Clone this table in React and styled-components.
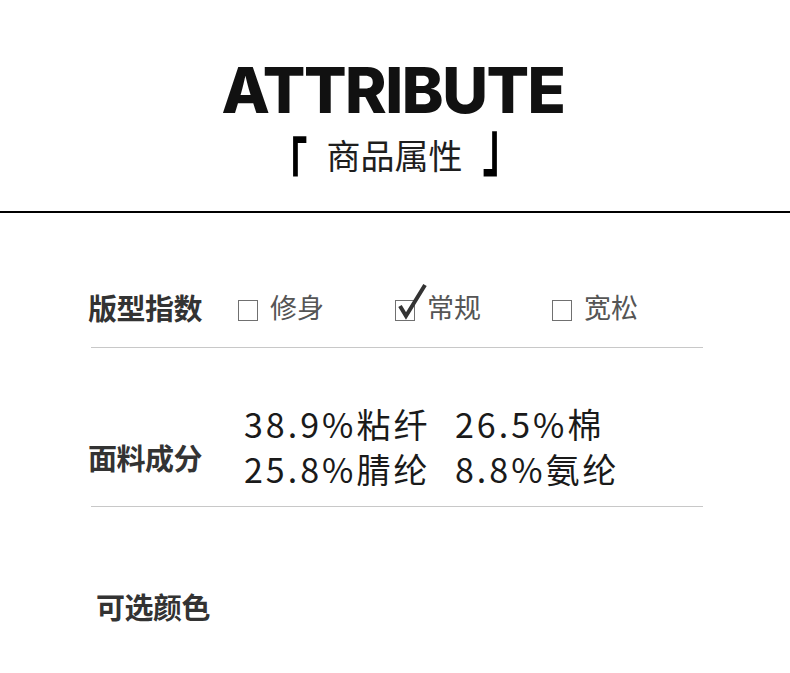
import React from "react";
import styled, { createGlobalStyle } from "styled-components";

const Global = createGlobalStyle`
  html, body { margin: 0; padding: 0; background: #fff; }
  body { font-family: "Noto Sans CJK SC", "Noto Sans", sans-serif; }
`;

const Page = styled.div`
  width: 790px;
  height: 673px;
  background: #fff;
  overflow: hidden;
`;

const Header = styled.header`
  height: 213px;
  border-bottom: 2px solid #000;
  display: flex;
  flex-direction: column;
  align-items: center;
  padding-top: 59px;
  box-sizing: border-box;
`;

const Title = styled.h1`
  margin: 0;
  font-family: Inter, "Liberation Sans", sans-serif;
  font-weight: 800;
  font-size: 63px;
  line-height: 1;
  letter-spacing: -1.5px;
  color: #111;
  transform: translateX(-2px);
`;

const Subtitle = styled.div`
  margin-top: 13px;
  height: 40px;
  display: flex;
  align-items: center;
  font-family: "Noto Sans CJK SC", sans-serif;
  font-size: 34px;
  line-height: 40px;
  color: #1e1e1e;
`;

const Bracket = styled.span`
  display: inline-block;
  font-size: 40px;
  line-height: 28px;
  font-weight: 700;
  color: #000;
  margin: ${(p) => p.$m};
  transform: scaleY(${(p) => p.$s});
  transform-origin: ${(p) => p.$origin};
`;

const List = styled.div`
  margin-left: 91px;
  width: 612px;
`;

const Row = styled.div`
  display: flex;
  align-items: ${(p) => p.$align || "center"};
  padding: ${(p) => p.$pad};
  border-bottom: ${(p) => (p.$line ? "1px solid #c8c8c8" : "none")};
`;

const Label = styled.div`
  width: ${(p) => p.$w}px;
  flex: none;
  margin-left: ${(p) => p.$ml || -3}px;
  margin-top: ${(p) => p.$mt || 0}px;
  font-family: "Noto Sans CJK SC", sans-serif;
  font-weight: 700;
  font-size: 29px;
  line-height: 40px;
  letter-spacing: -0.5px;
  color: #333;
`;

const Options = styled.div`
  display: grid;
  grid-template-columns: repeat(3, 157px);
`;

const Option = styled.div`
  display: flex;
  align-items: center;
  gap: ${(p) => p.$gap}px;
  font-family: "Noto Sans CJK SC", sans-serif;
  font-size: 27px;
  line-height: 40px;
  color: #555;
`;

const BoxWrap = styled.span`
  position: relative;
  width: 20px;
  height: 21px;
  flex: none;
  box-sizing: border-box;
  border: 1.5px solid #707070;
  margin-top: 6px;
`;

const Tick = styled.svg`
  position: absolute;
  left: 0px;
  top: -17px;
  overflow: visible;
`;

const Comp = styled.div`
  display: grid;
  grid-template-columns: 211px auto;
  font-family: "Noto Sans CJK SC", sans-serif;
  font-size: 34px;
  line-height: 45px;
  letter-spacing: 3px;
  color: #1a1a1a;
`;

function Check({ checked }) {
  return (
    <BoxWrap>
      {checked && (
        <Tick width="30" height="36" viewBox="0 0 30 36">
          <path
            d="M4 22 L10 32 L29 1"
            fill="none"
            stroke="#333"
            strokeWidth="4"
            strokeLinejoin="miter"
          />
        </Tick>
      )}
    </BoxWrap>
  );
}

export default function App() {
  return (
    <Page>
      <Global />
      <Header>
        <Title>ATTRIBUTE</Title>
        <Subtitle>
          <Bracket $m="0 19px 0 0" $s={1.55} $origin="50% -2px">「</Bracket>
          <span>商品属性</span>
          <Bracket $m="0 0 0 20px" $s={1.75} $origin="50% 34px">」</Bracket>
        </Subtitle>
      </Header>
      <List>
        <Row $line $pad="74px 0 20px">
          <Label $w={150}>版型指数</Label>
          <Options>
            <Option $gap={12}>
              <Check />
              修身
            </Option>
            <Option $gap={12}>
              <Check checked />
              常规
            </Option>
            <Option $gap={12}>
              <Check />
              宽松
            </Option>
          </Options>
        </Row>
        <Row $line $align="flex-start" $pad="53px 0 15px">
          <Label $w={156} $mt={36}>面料成分</Label>
          <Comp>
            <span>38.9%粘纤</span>
            <span>26.5%棉</span>
            <span>25.8%腈纶</span>
            <span>8.8%氨纶</span>
          </Comp>
        </Row>
        <Row $pad="79px 0 0">
          <Label $w={150} $ml={5}>可选颜色</Label>
        </Row>
      </List>
    </Page>
  );
}
